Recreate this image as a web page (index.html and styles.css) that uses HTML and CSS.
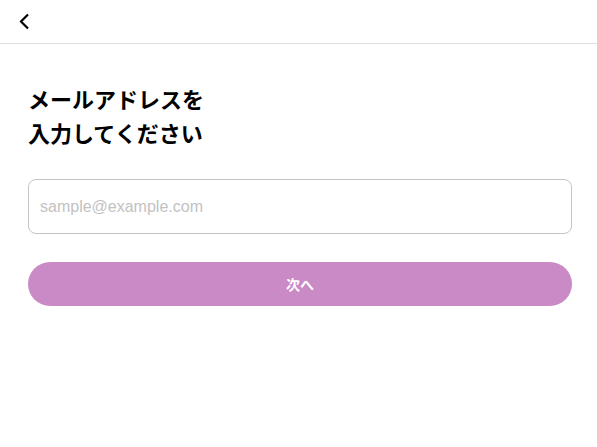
FILE: index.html
```html
<!DOCTYPE html>
<html lang="ja">
<head>
  <meta charset="UTF-8">
  <title>メールアドレス入力</title>
  <link rel="stylesheet" href="styles.css">
</head>
<body>

<header class="topbar">
  <button class="back" aria-label="戻る">
    <svg width="12" height="17" viewBox="0 0 12 17"><path d="M10 1.5 L3 8.5 L10 15.5" fill="none" stroke="#000" stroke-width="2.2"/></svg>
  </button>
</header>

<main class="content">
  <h1 class="title">メールアドレスを<br>入力してください</h1>
  <input class="email" type="email" placeholder="sample@example.com">
  <button class="next">次へ</button>
</main>

</body>
</html>
```

FILE: styles.css
```css
body {
  margin: 0;
  background-color: #fff;
  color: #000;
  font-family: "Liberation Sans", "Noto Sans CJK JP", sans-serif;
}
.topbar {
  height: 43px;
  border-bottom: 1px solid #dedede;
  display: flex;
  align-items: center;
  padding-left: 16px;
}
.back {
  background: none;
  border: none;
  padding: 0;
  width: 16px;
  height: 20px;
  display: flex;
  align-items: center;
  justify-content: center;
  cursor: pointer;
}
.content {
  padding: 40px 25px 0 28px;
  display: flex;
  flex-direction: column;
}
.title {
  margin: 0 0 27px;
  font-size: 22px;
  line-height: 34px;
  font-weight: bold;
}
.email {
  box-sizing: border-box;
  height: 55px;
  border: 1px solid #c4c4c4;
  border-radius: 8px;
  padding: 0 11px;
  font-size: 16px;
  font-family: "Liberation Sans", sans-serif;
  outline: none;
}
.email::placeholder {
  color: #c2c2c2;
}
.next {
  margin-top: 28px;
  height: 44px;
  border: none;
  border-radius: 22px;
  background-color: #c98ac6;
  color: #fff;
  font-size: 14px;
  font-weight: bold;
  font-family: "Liberation Sans", "Noto Sans CJK JP", sans-serif;
  cursor: pointer;
}
```
